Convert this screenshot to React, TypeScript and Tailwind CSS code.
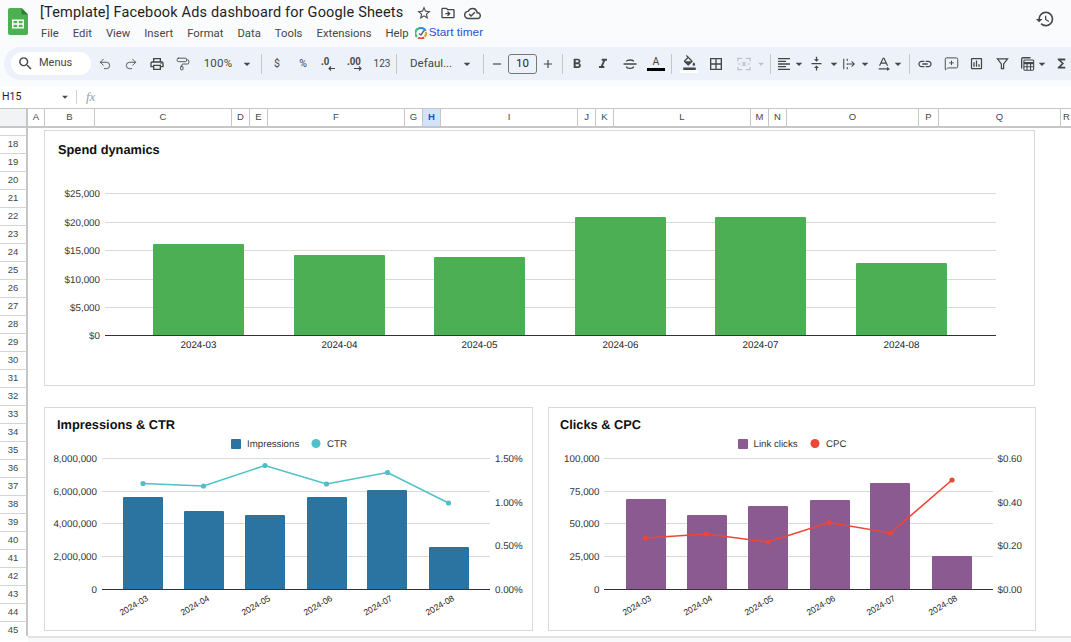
import React from "react";
import {
  MdSearch,
  MdOutlinePrint,
  MdFormatBold,
  MdFormatItalic,
  MdFormatColorFill,
  MdBorderAll,
  MdFormatAlignLeft,
  MdVerticalAlignCenter,
  MdLink,
  MdOutlineInsertChart,
  MdFunctions,
  MdStarBorder,
  MdOutlineDriveFileMove,
  MdOutlineCloudDone,
  MdHistory,
  MdArrowDropDown,
  MdAdd,
  MdRemove,
} from "react-icons/md";
import { Undo2, Redo2, PaintRoller, MessageSquarePlus } from "lucide-react";

const ui = "font-['Roboto','Liberation_Sans',sans-serif]";
const iconColor = "#444746";

const columns: [string, string][] = [
  ["A", "w-[17px]"],
  ["B", "w-[50px]"],
  ["C", "w-[137px]"],
  ["D", "w-[18px]"],
  ["E", "w-[18px]"],
  ["F", "w-[137px]"],
  ["G", "w-[18px]"],
  ["H", "w-[18px]"],
  ["I", "w-[137px]"],
  ["J", "w-[18px]"],
  ["K", "w-[18px]"],
  ["L", "w-[137px]"],
  ["M", "w-[18px]"],
  ["N", "w-[18px]"],
  ["O", "w-[132px]"],
  ["P", "w-[20px]"],
  ["Q", "w-[122px]"],
  ["R", "w-[12px]"],
];

const rows = Array.from({ length: 28 }, (_, i) => i + 18);
const months = ["2024-03", "2024-04", "2024-05", "2024-06", "2024-07", "2024-08"];
const menus = ["File", "Edit", "View", "Insert", "Format", "Data", "Tools", "Extensions", "Help"];

type Bar = { x: number; top: number };
type Tick = { label: string; y: number };

type ChartProps = {
  box: [number, number, number, number];
  title: string;
  titleX: number;
  titleY: number;
  gridFrom: number;
  gridTo: number;
  gridY: number[];
  axisY: number;
  bars: Bar[];
  barWidth: number;
  barColor: string;
  left: Tick[];
  leftX: number;
  right?: Tick[];
  rightX?: number;
  line?: [number, number][];
  lineColor?: string;
  legend?: { squareX: number; text: string; textX: number; circleX: number; lineText: string; lineTextX: number };
  slanted?: boolean;
};

const Chart = ({
  box,
  title,
  titleX,
  titleY,
  gridFrom,
  gridTo,
  gridY,
  axisY,
  bars,
  barWidth,
  barColor,
  left,
  leftX,
  right,
  rightX,
  line,
  lineColor,
  legend,
  slanted,
}: ChartProps) => (
  <svg
    width={box[2]}
    height={box[3]}
    viewBox={box.join(" ")}
    className="block"
    fontFamily="'Liberation Sans', Arial, sans-serif"
    textRendering="geometricPrecision"
  >
    <text x={titleX} y={titleY - 0.5} fontSize="12.8" fontWeight="700" fill="#111">
      {title}
    </text>
    {legend && (
      <g fontSize="9.7" fill="#333">
        <rect x={legend.squareX} y="439" width="10" height="10" rx="1" fill={barColor} />
        <text x={legend.textX} y="446.5">{legend.text}</text>
        <circle cx={legend.circleX} cy="443.5" r="4.5" fill={lineColor} />
        <text x={legend.lineTextX} y="446.5">{legend.lineText}</text>
      </g>
    )}
    {gridY.map((y) => (
      <line key={y} x1={gridFrom} x2={gridTo} y1={y + 0.5} y2={y + 0.5} stroke="#d9d9d9" />
    ))}
    {bars.map((b) => (
      <path
        key={b.x}
        d={`M${b.x} ${axisY}V${b.top + 1}q0 -1 1 -1H${b.x + barWidth - 1}q1 0 1 1V${axisY}Z`}
        fill={barColor}
      />
    ))}
    <line x1={gridFrom} x2={gridTo} y1={axisY + 0.5} y2={axisY + 0.5} stroke="#333" />
    {left.map((t) => (
      <text key={t.label} x={leftX} y={t.y + 3.5} textAnchor="end" fontSize="9.8" fill="#333">
        {t.label}
      </text>
    ))}
    {right?.map((t) => (
      <text key={t.label} x={rightX} y={t.y + 3.5} fontSize="9.8" fill="#333">
        {t.label}
      </text>
    ))}
    {months.map((m, i) => {
      const cx = bars[i].x + barWidth / 2;
      return slanted ? (
        <text
          key={m}
          x={cx + 6}
          y={axisY + 11}
          fontSize="8.6"
          fill="#222"
          textAnchor="end"
          transform={`rotate(-30 ${cx + 6} ${axisY + 11})`}
        >
          {m}
        </text>
      ) : (
        <text key={m} x={cx} y={axisY + 12.5} fontSize="9.8" fill="#222" textAnchor="middle">
          {m}
        </text>
      );
    })}
    {line && (
      <>
        <polyline points={line.map((p) => p.join(",")).join(" ")} fill="none" stroke={lineColor} strokeWidth="1.6" />
        {line.map((p) => (
          <circle key={p[0]} cx={p[0]} cy={p[1]} r="2.6" fill={lineColor} />
        ))}
      </>
    )}
  </svg>
);

const Cell = ({ className = "w-[26px]", children }: { className?: string; children: React.ReactNode }) => (
  <div className={`${className} h-full shrink-0 flex items-center justify-center text-[#444746]`}>{children}</div>
);

const Sep = ({ className = "mx-[6px]" }: { className?: string }) => (
  <div className={`${className} w-px h-[20px] bg-[#c7c7c7] shrink-0`} />
);

const Caret = ({ className = "w-[14px]" }: { className?: string }) => (
  <Cell className={className}>
    <MdArrowDropDown size={16} color={iconColor} className="shrink-0" />
  </Cell>
);

const SheetsLogo = () => (
  <svg width="20" height="27" viewBox="0 0 20 27">
    <path d="M2 0H13.5L20 6.5V25a2 2 0 0 1-2 2H2a2 2 0 0 1-2-2V2a2 2 0 0 1 2-2Z" fill="#4caf50" />
    <path d="M13.5 0L20 6.5H15a1.5 1.5 0 0 1-1.5-1.5Z" fill="#2e7d32" />
    <path d="M4 11.5H16V20.5H4ZM5.5 13V15.2H9.2V13ZM10.8 13V15.2H14.5V13ZM5.5 16.8V19H9.2V16.8ZM10.8 16.8V19H14.5V16.8Z" fill="#fff" fillRule="evenodd" />
  </svg>
);

const TimerLogo = () => (
  <svg width="12" height="12" viewBox="0 0 12 12" className="shrink-0">
    <path d="M2 10A5 5 0 0 1 4 1.4" fill="none" stroke="#3fbf7f" strokeWidth="2.2" />
    <path d="M4 1.4A5 5 0 0 1 10.6 4" fill="none" stroke="#2f8fe0" strokeWidth="2.2" />
    <path d="M10.8 5A5 5 0 0 1 9.6 9.8" fill="none" stroke="#f0a030" strokeWidth="2.2" />
    <path d="M3.2 10.8A5 5 0 0 0 9 10.4" fill="none" stroke="#e5483a" strokeWidth="2.2" />
    <path d="M4 6.5L6 8L9 3.5" fill="none" stroke="#5a6672" strokeWidth="1.4" />
  </svg>
);

const SmallText = ({ children }: { children: React.ReactNode }) => (
  <span className="text-[10px] text-[#444746]">{children}</span>
);

const DecimalDown = () => (
  <svg width="18" height="18" viewBox="0 0 18 18" fill="none" stroke="#444746">
    <text x="1" y="10" fontSize="10" fontWeight="700" fill="#444746" stroke="none" fontFamily="'Liberation Sans', sans-serif">.0</text>
    <path d="M15 13.5H9M11 11.5L9 13.5L11 15.5" strokeWidth="1.1" />
  </svg>
);

const DecimalUp = () => (
  <svg width="20" height="18" viewBox="0 0 20 18" fill="none" stroke="#444746">
    <text x="0" y="10" fontSize="10" fontWeight="700" fill="#444746" stroke="none" fontFamily="'Liberation Sans', sans-serif">.00</text>
    <path d="M7 13.5H14M12 11.5L14 13.5L12 15.5" strokeWidth="1.1" />
  </svg>
);

const MergeIcon = () => (
  <svg width="14" height="14" viewBox="0 0 16 16" fill="none" stroke="#bdc1c6" strokeWidth="1.4">
    <path d="M1 5V1.5H6M10 1.5H15V5M1 11V14.5H6M10 14.5H15V11M6 5.5L8 8L6 10.5M10 5.5L8 8L10 10.5M1 8H4M12 8H15" />
  </svg>
);

const WrapIcon = () => (
  <svg width="14" height="14" viewBox="0 0 16 16" fill="none" stroke="#444746" strokeWidth="1.2">
    <path d="M2 2V14M6 2V4.5M6 7V9M6 11.5V14M7 8H14M11 5L14 8L11 11" />
  </svg>
);

const StrikeIcon = () => (
  <svg width="16" height="16" viewBox="0 0 16 16" fill="none" stroke="#444746" strokeWidth="1.3">
    <path d="M1.5 8H14.5M4.5 5.5C4.5 3.5 11.5 3.5 11.5 5.5M4.5 10.5C4.5 13 11.5 13 11.5 10.5" />
  </svg>
);

const RotateIcon = () => (
  <svg width="16" height="16" viewBox="0 0 18 18" fill="none" stroke="#444746" strokeWidth="1.3">
    <path d="M4 11L8 2.5H9L13 11M5.5 8H11.5M3 14.5H14M12.5 12.8L14.5 14.5L12.5 16.2" />
  </svg>
);

const FunnelIcon = () => (
  <svg width="13" height="13" viewBox="0 0 14 14" fill="none" stroke="#444746" strokeWidth="1.3">
    <path d="M1.5 2H12.5L8.2 7.5V12.5H5.8V7.5Z" />
  </svg>
);

const TableIcon = () => (
  <svg width="16" height="16" viewBox="0 0 18 18" fill="none" stroke="#444746" strokeWidth="1.2">
    <path d="M3 14V3.5A1.5 1.5 0 0 1 4.5 2H13" strokeWidth="1.5" />
    <rect x="5.5" y="4.5" width="11" height="11.5" rx="1" />
    <path d="M5.5 8H16.5" strokeWidth="2.5" />
    <path d="M5.5 12H16.5M9 8V16M13 8V16" />
  </svg>
);

const Toolbar = () => (
  <div className="flex items-center h-[33px] ml-[4px] pl-[7px] bg-[#edf2fa] rounded-l-[17px]">
    <div className="w-[80px] h-[23px] shrink-0 rounded-full bg-white flex items-center pl-[6px] gap-[5px]">
      <MdSearch size={17} color={iconColor} />
      <span className="text-[11px] text-[#444746]">Menus</span>
    </div>
    <Cell className="w-[26px] ml-[1px]"><Undo2 size={14} strokeWidth={1.5} /></Cell>
    <Cell><Redo2 size={14} strokeWidth={1.5} /></Cell>
    <Cell><MdOutlinePrint size={16} /></Cell>
    <Cell><PaintRoller size={14} strokeWidth={1.5} /></Cell>
    <Cell className="w-[38px] ml-[3px]">
      <span className="text-[11.5px] text-[#444746] tracking-[0.2px]">100%</span>
    </Cell>
    <Caret className="w-[14px] ml-[3px]" />
    <Sep className="ml-[7px] mr-[2px]" />
    <Cell><span className="text-[10.5px] text-[#444746]">$</span></Cell>
    <Cell><span className="text-[10.5px] text-[#444746]">%</span></Cell>
    <Cell><DecimalDown /></Cell>
    <Cell className="w-[29px]"><DecimalUp /></Cell>
    <Cell className="w-[22px]"><SmallText>123</SmallText></Cell>
    <Sep className="ml-[3px] mr-[13px]" />
    <span className="w-[44px] shrink-0 text-[11.5px] text-[#444746] whitespace-nowrap">Defaul...</span>
    <Caret className="w-[14px] ml-[6px]" />
    <Sep className="ml-[9px] mr-[4px]" />
    <Cell className="w-[18px]"><MdRemove size={14} /></Cell>
    <div className="w-[29px] h-[20px] ml-[2px] shrink-0 border border-[#747775] rounded-[3px] flex items-center justify-center text-[11.5px] text-[#1f1f1f]">
      10
    </div>
    <Cell className="w-[22px]"><MdAdd size={14} /></Cell>
    <Sep className="ml-[3px] mr-[1px]" />
    <Cell><MdFormatBold size={16} /></Cell>
    <Cell><MdFormatItalic size={16} /></Cell>
    <Cell className="w-[27px]"><StrikeIcon /></Cell>
    <Cell className="w-[26px]">
      <div className="flex flex-col items-center">
        <span className="text-[10.5px] leading-[12px] text-[#444746]">A</span>
        <div className="w-[18px] h-[3px] bg-black" />
      </div>
    </Cell>
    <Sep className="ml-[2px] mr-[7px]" />
    <Cell className="w-[20px]">
      <div className="flex flex-col items-center">
        <MdFormatColorFill size={15} color={iconColor} />
        <div className="w-[18px] h-[3px] bg-white" />
      </div>
    </Cell>
    <Cell className="w-[34px]"><MdBorderAll size={16} /></Cell>
    <Cell className="w-[22px]"><MergeIcon /></Cell>
    <Cell className="w-[12px]"><MdArrowDropDown size={14} color="#bdc1c6" className="shrink-0" /></Cell>
    <Sep className="ml-[3px] mr-[3px]" />
    <Cell className="w-[20px]"><MdFormatAlignLeft size={16} /></Cell>
    <Caret className="w-[10px]" />
    <Cell className="w-[25px]"><MdVerticalAlignCenter size={15} /></Cell>
    <Caret className="w-[9px]" />
    <Cell className="w-[22px]"><WrapIcon /></Cell>
    <Caret className="w-[10px]" />
    <Cell className="w-[18px] ml-[5px]"><RotateIcon /></Cell>
    <Caret className="w-[10px]" />
    <Sep className="ml-[6px] mr-[2px]" />
    <Cell className="w-[26px]"><MdLink size={16} /></Cell>
    <Cell className="w-[26px]"><MessageSquarePlus size={15} strokeWidth={1.5} /></Cell>
    <Cell className="w-[25px]"><MdOutlineInsertChart size={15} /></Cell>
    <Cell className="w-[26px]"><FunnelIcon /></Cell>
    <Cell className="w-[24px]"><TableIcon /></Cell>
    <Caret className="w-[6px]" />
    <Cell className="w-[28px] ml-[2px]"><MdFunctions size={15} /></Cell>
  </div>
);

export default function App() {
  return (
    <div className={`${ui} w-[1071px] h-[642px] overflow-hidden bg-white text-[#1f1f1f] flex flex-col`}>
      <div className="bg-[#f9fbfd] h-[86px] shrink-0 flex flex-col">
        <div className="h-[47px] shrink-0 flex pl-[8px] pt-[8px]">
          <SheetsLogo />
          <div className="ml-[12px] flex flex-col -mt-[6px]">
            <div className="flex items-center h-[22px]">
              <span className="w-[376px] text-[14.5px] tracking-[0.17px] text-[#1f1f1f] whitespace-nowrap">
                [Template] Facebook Ads dashboard for Google Sheets
              </span>
              <div className="flex items-center gap-[8px] text-[#444746]">
                <MdStarBorder size={16} />
                <MdOutlineDriveFileMove size={16} />
                <MdOutlineCloudDone size={17} />
              </div>
            </div>
            <div className="flex items-center h-[21px] pl-[1px] text-[11.3px] text-[#444746]">
              <div className="flex gap-[14px]">
                {menus.map((m) => (
                  <span key={m}>{m}</span>
                ))}
              </div>
              <div className="ml-[6px] flex items-center gap-[2px] -mt-[3px]">
                <TimerLogo />
                <span className="font-['Liberation_Sans',sans-serif] text-[11.8px] text-[#1a56d6]">Start timer</span>
              </div>
            </div>
          </div>
          <div className="ml-auto mr-[16px] mt-[1px] text-[#444746]">
            <MdHistory size={20} />
          </div>
        </div>
        <Toolbar />
      </div>

      <div className="h-[22px] shrink-0 flex items-center text-[10.5px] text-[#1f1f1f]">
        <span className="w-[58px] pl-[2px]">H15</span>
        <MdArrowDropDown size={14} color={iconColor} />
        <div className="w-px h-[14px] bg-[#d3d3d3] ml-[4px]" />
        <span className="ml-[9px] font-['Liberation_Serif',serif] italic text-[13px] text-[#9aa0a6]">fx</span>
      </div>

      <div className="h-[20px] shrink-0 flex border-t border-[#c4c7c5] border-b-2 font-['Liberation_Sans',sans-serif] text-[9.5px] text-[#444746]">
        <div className="w-[28px] shrink-0 bg-[#f1f3f4] border-r-2 border-[#c4c7c5]" />
        {columns.map(([name, width]) => (
          <div
            key={name}
            className={`${width} shrink-0 flex items-center justify-center border-r border-[#c4c7c5] ${
              name === "H" ? "bg-[#d3e3fd] font-bold text-[#0b57d0]" : ""
            }`}
          >
            {name}
          </div>
        ))}
      </div>

      <div className="flex-1 min-h-0 flex flex-col">
        <div className="h-[508px] shrink-0 flex overflow-hidden">
          <div className="w-[28px] shrink-0 border-r-2 border-[#c4c7c5] font-['Liberation_Sans',sans-serif] text-[9.5px] text-[#444746]">
            <div className="h-[8px] border-b border-[#d4d4d4]" />
            {rows.map((r) => (
              <div key={r} className="h-[18px] flex items-center justify-center border-b border-[#d4d4d4]">
                {r}
              </div>
            ))}
          </div>
          <div className="pl-[16px] pt-[2px] flex flex-col gap-[21px]">
            <div className="border border-[#d9d9d9] w-[991px] h-[256px] shrink-0">
              <Chart
                box={[45, 131, 989, 254]}
                title="Spend dynamics"
                titleX={58}
                titleY={154}
                gridFrom={105}
                gridTo={996}
                gridY={[193, 222, 250, 279, 307]}
                axisY={335}
                bars={[
                  { x: 153, top: 244 },
                  { x: 294, top: 255 },
                  { x: 434, top: 257 },
                  { x: 575, top: 217 },
                  { x: 715, top: 217 },
                  { x: 856, top: 263 },
                ]}
                barWidth={91}
                barColor="#4caf54"
                left={[
                  { label: "$25,000", y: 193 },
                  { label: "$20,000", y: 222 },
                  { label: "$15,000", y: 250 },
                  { label: "$10,000", y: 279 },
                  { label: "$5,000", y: 307 },
                  { label: "$0", y: 335 },
                ]}
                leftX={100}
              />
            </div>
            <div className="flex gap-[15px]">
              <div className="border border-[#d9d9d9] w-[489px] h-[224px] shrink-0">
                <Chart
                  box={[45, 408, 487, 222]}
                  title="Impressions & CTR"
                  titleX={57}
                  titleY={429}
                  gridFrom={102}
                  gridTo={490}
                  gridY={[458, 491, 523, 556]}
                  axisY={589}
                  bars={[
                    { x: 123, top: 497 },
                    { x: 184, top: 511 },
                    { x: 245, top: 515 },
                    { x: 307, top: 497 },
                    { x: 367, top: 490 },
                    { x: 429, top: 547 },
                  ]}
                  barWidth={40}
                  barColor="#2b73a0"
                  left={[
                    { label: "8,000,000", y: 458 },
                    { label: "6,000,000", y: 491 },
                    { label: "4,000,000", y: 523 },
                    { label: "2,000,000", y: 556 },
                    { label: "0", y: 589 },
                  ]}
                  leftX={97}
                  right={[
                    { label: "1.50%", y: 458 },
                    { label: "1.00%", y: 502 },
                    { label: "0.50%", y: 545.5 },
                    { label: "0.00%", y: 589 },
                  ]}
                  rightX={495}
                  line={[
                    [143, 483.5],
                    [203.5, 486],
                    [265, 465.5],
                    [326.5, 484],
                    [387.5, 472.5],
                    [448.5, 503],
                  ]}
                  lineColor="#4fc0c8"
                  legend={{ squareX: 231, text: "Impressions", textX: 247, circleX: 316, lineText: "CTR", lineTextX: 327 }}
                  slanted
                />
              </div>
              <div className="border border-[#d9d9d9] w-[488px] h-[224px] shrink-0">
                <Chart
                  box={[549, 408, 486, 222]}
                  title="Clicks & CPC"
                  titleX={560}
                  titleY={429}
                  gridFrom={604}
                  gridTo={993}
                  gridY={[458, 491, 523, 556]}
                  axisY={589}
                  bars={[
                    { x: 626, top: 499 },
                    { x: 687, top: 515 },
                    { x: 748, top: 506 },
                    { x: 810, top: 500 },
                    { x: 870, top: 483 },
                    { x: 932, top: 556 },
                  ]}
                  barWidth={40}
                  barColor="#8b5a91"
                  left={[
                    { label: "100,000", y: 458 },
                    { label: "75,000", y: 491 },
                    { label: "50,000", y: 523 },
                    { label: "25,000", y: 556 },
                    { label: "0", y: 589 },
                  ]}
                  leftX={599.5}
                  right={[
                    { label: "$0.60", y: 458 },
                    { label: "$0.40", y: 502 },
                    { label: "$0.20", y: 545.5 },
                    { label: "$0.00", y: 589 },
                  ]}
                  rightX={997.5}
                  line={[
                    [645.5, 538],
                    [706.5, 534],
                    [768, 542],
                    [829, 522.5],
                    [890.5, 533],
                    [952, 480],
                  ]}
                  lineColor="#ee4636"
                  legend={{ squareX: 738, text: "Link clicks", textX: 753.5, circleX: 815, lineText: "CPC", lineTextX: 826 }}
                  slanted
                />
              </div>
            </div>
          </div>
        </div>
        <div className="flex-1 ml-[28px] bg-[#f8f9fa] border-t-2 border-[#e3e3e3]" />
      </div>
    </div>
  );
}
